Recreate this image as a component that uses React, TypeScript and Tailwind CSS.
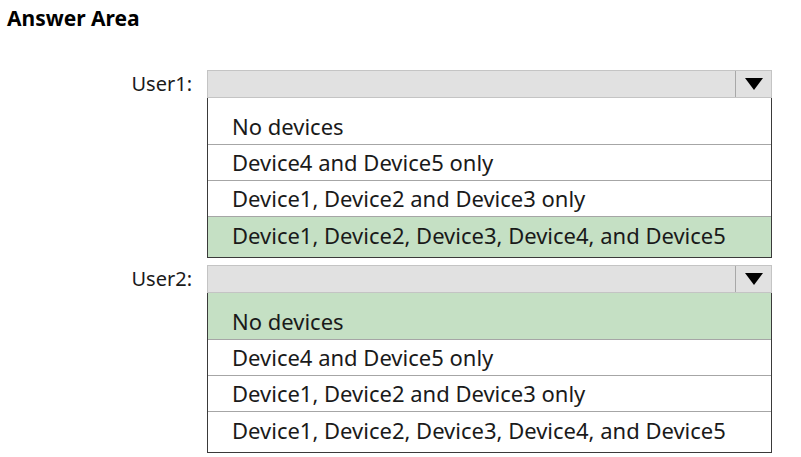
const options = [
  "No devices",
  "Device4 and Device5 only",
  "Device1, Device2 and Device3 only",
  "Device1, Device2, Device3, Device4, and Device5",
];

function Dropdown({ label, answer }: { label: string; answer: number }) {
  return (
    <div className="flex">
      <div className="w-[192px] h-[28px] flex items-center justify-end text-[20px] text-[#1a1a1a]">{label}</div>
      <div className="ml-[15px] w-[565px]">
        <div className="flex h-[28px] border border-[#c4c4c4] bg-[#e1e1e1]">
          <div className="flex-1" />
          <div className="w-[36px] border-l border-[#a8a8a8] flex items-center justify-center">
            <svg width="20" height="14" viewBox="0 0 20 14">
              <polygon points="1,1 19,1 10,13" fill="#000" />
            </svg>
          </div>
        </div>
        <div className="border border-t-0 border-[#3a3a3a]">
          {options.map((opt, i) => {
            const first = i === 0;
            const last = i === options.length - 1;
            return (
              <div
                key={opt}
                className={
                  (i === answer ? "bg-[#c5e0c4] " : "bg-white ") +
                  (first ? "h-[47px] pt-[10px] " : last ? "h-[40px] pb-[4px] " : "h-[36px] ") +
                  (last ? "" : "border-b border-[#a6a6a6] ") +
                  "flex items-center pl-[24px] text-[22px] text-[#1a1a1a]"
                }
              >
                {opt}
              </div>
            );
          })}
        </div>
      </div>
    </div>
  );
}

export default function App() {
  return (
    <div className="w-[801px] h-[457px] bg-white font-['Noto_Sans','Open_Sans',sans-serif] overflow-hidden">
      <div className="pl-[7px] pt-[5px] text-[21px] font-bold leading-[26px] text-black">Answer Area</div>
      <div className="mt-[39px] flex flex-col gap-[7px]">
        <Dropdown label="User1:" answer={3} />
        <Dropdown label="User2:" answer={0} />
      </div>
    </div>
  );
}
